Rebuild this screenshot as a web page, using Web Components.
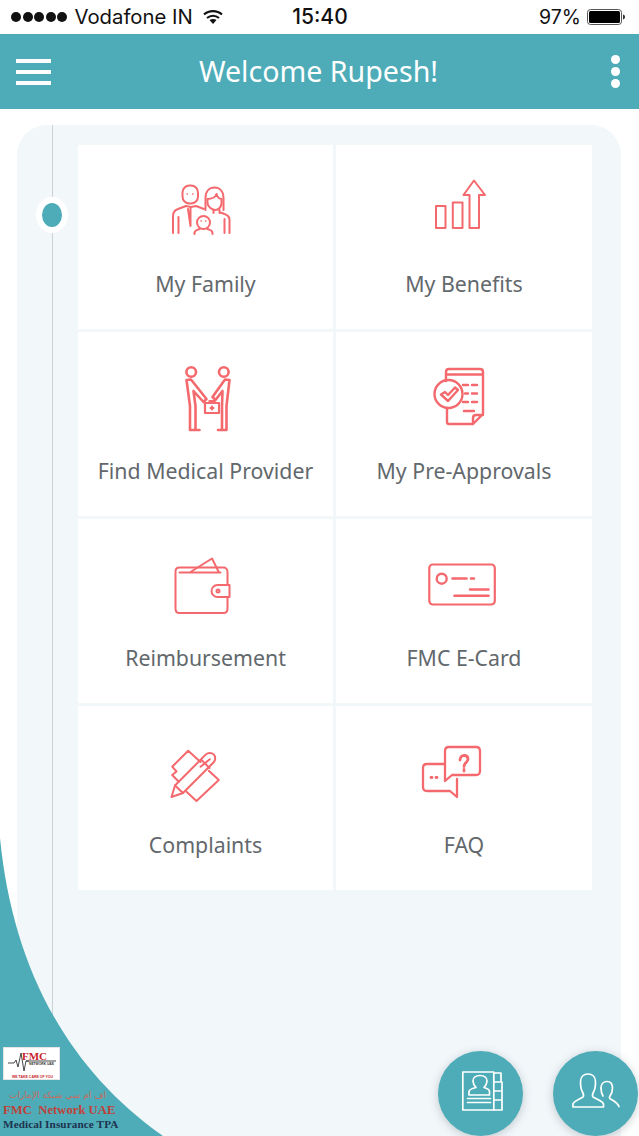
<!DOCTYPE html>
<html lang="en"><head><meta charset="utf-8"><title>FMC</title>
<style>
html,body{margin:0;padding:0;background:#fff}
body{font-family:"Noto Sans","Open Sans",sans-serif}
</style></head><body>
<fmc-app>
  <fmc-statusbar></fmc-statusbar>
  <fmc-header title-text="Welcome Rupesh!"></fmc-header>
  <fmc-panel>
    <fmc-tile label="My Family"><svg viewBox="155.5 170 100 80">
      <rect x="182" y="185.5" width="15.5" height="18" rx="7"/>
      <path d="M172.5 233v-17c0-4 2-6 5-7l8-3 5 1 5-1 8 3"/><path d="M178 233v-16M190 208v7M187.5 209l2.500 17M190 226v-11"/>
      <path d="M205 210v-12c0-7 4-10.500 9-10.500s9 3.500 9 10.500v12"/><path d="M207 199c4 0 8-2 9-5 1 3 3 5 5 5v4c0 4-3 7-6 7s-8-3-8-7z"/>
      <path d="M213 210v3M219 210v3M219 212l5 2c3 1 5 3 5 6v13M224 233v-14"/>
      <circle cx="203" cy="222.500" r="6.500"/><path d="M194 234v-1c0-3 3-3 5-4M212 234v-1c0-3-3-3-5-4"/>
      <path d="M200.500 221h.5M205 221h.5M186.500 194h.5M192 194h.5" stroke-width="1.300"/>
    </svg></fmc-tile>
    <fmc-tile label="My Benefits"><svg viewBox="414 170 100 80">
      <rect x="436" y="206" width="9.500" height="22"/><rect x="452.800" y="202.500" width="9.700" height="25.500"/>
      <path d="M469.500 228V195h-6l10.500-14.500L485 195h-6v33z"/>
    </svg></fmc-tile>
    <fmc-tile label="Find Medical Provider"><svg viewBox="155.500 357 100 80" style="stroke-width:2.600">
      <circle cx="190.700" cy="372" r="4.800"/><circle cx="223.300" cy="372" r="4.800"/>
      <path d="M186 380l4.500-.5L206 399l-3 3-10-11 2 15v24h4M186 380l3.500 26v24h4"/>
      <path d="M229 380l-4.500-.5L212 397l3 3 7-9-.5 15v24h-4M229 380l-3 26v24h-5"/>
      <path d="M204.500 403h14v10h-14zM209 403v-2h5v2M211.500 406.500v3M210 408h3" stroke-width="2.200"/>
    </svg></fmc-tile>
    <fmc-tile label="My Pre-Approvals"><svg viewBox="414 357 100 80" style="stroke-width:2.400">
      <path d="M446 381v-9c0-2 1-3 3-3h31c2 0 3 1 3 3v42l-10 10h-24c-1 0-2-1-2-2v-14M446 374.500h37M483 415h-7c-2 0-3 1-3 3v6"/>
      <circle cx="448.500" cy="394" r="14"/><path d="M441 394.500l4-2.500 3 3 7-7.500 3 2.500-10 11z"/>
      <path d="M463 385h5M472 385h5M465 393.500h3M472 393.500h5M463 402h5M472 402h5M464 411h10"/>
    </svg></fmc-tile>
    <fmc-tile label="Reimbursement"><svg viewBox="155.500 544 100 80">
      <path d="M227 585v-13c0-3-2-4.500-4-4.500h-44c-2.500 0-4 1.500-4 4v37c0 3 1.500 4.500 4 4.500h44c2.500 0 4-1.500 4-4.500v-11.500"/>
      <path d="M179 572.500h41M190 572l21.500-13.500 6.500 13"/><path d="M229 585h-12c-3.500 0-6 3-6 6s2.500 6 6 6h12z"/>
      <circle cx="217.500" cy="591" r="1.500"/>
    </svg></fmc-tile>
    <fmc-tile label="FMC E-Card"><svg viewBox="414 544 100 80">
      <rect x="429.300" y="564.500" width="65.500" height="40" rx="3.500" stroke-width="2.200"/><circle cx="441.700" cy="578.700" r="5" stroke-width="2.400"/>
      <path d="M452.500 578.500h14M471 578.500h3M470 589.500h18.500M454.500 595.700h34" stroke-width="2.600"/>
    </svg></fmc-tile>
    <fmc-tile label="Complaints"><svg viewBox="155.500 731 100 80">
      <path d="M200 762l-12.300-11.300-16 16 4.300 4.800-4.300 3.500 6.600 6.700"/>
      <path d="M208.300 770.700l10 9.300L196 801l-10-9.300"/>
      <path d="M171 797l3.500-11.500 30.900-31.100c2-2 5.800-2 7.800 0s2 5.800 0 7.800L182.500 793z"/><path d="M174.500 785.500l8 7.500M201 760l8 8M200 766.700l9.300-7.400"/>
    </svg></fmc-tile>
    <fmc-tile label="FAQ"><svg viewBox="414 731 100 80" style="stroke-width:2.300">
      <path d="M445 781v-30c0-2.500 1.500-4 4-4h27c2.500 0 4 1.500 4 4v20c0 2.500-1.500 4-4 4h-24z"/>
      <path d="M445 764h-18c-2.500 0-4 1.500-4 4v19c0 2.500 1.500 4 4 4h23l7 6v-18"/>
      <path d="M460 760c0-3 2-4.500 4-4.500 2.500 0 4 1.500 4 3.500 0 3.500-4 3.500-4 7.500M464 769.500v1.500M431 777.500h1M436 777.500h1" stroke-width="2.800"/>
    </svg></fmc-tile>
  </fmc-panel>
  <fmc-corner></fmc-corner>
  <fmc-logo></fmc-logo>
  <fmc-fab style="left:437.500px"><svg viewBox="0 0 85 85">
    <rect x="24.800" y="21" width="31" height="38"/><path d="M56 22h7v9h-7M56 31h8v9h-8M56 40h8v9h-8M56 49h8v10h-8"/>
    <path d="M31 44v-3.500c0-2 3-3 7-4-2-2-3-4-3-6.500 0-3.500 3-5.500 7-5.500s7 2 7 5.500c0 2.500-1 4.500-3 6.500 4 1 5.500 2 5.500 4v3.500z"/><path d="M29.500 47.500h23M29.500 51.500h23"/>
  </svg></fmc-fab>
  <fmc-fab style="left:552.500px"><svg viewBox="0 0 85 85">
    <path d="M20 56v-3c1-3 5-4 10-7 1-1 1-2-.5-5-1.500-2.500-2-5-2-10 0-5 3-8 7.500-8s7.500 3 7.500 8c0 5-.5 7.500-2 10-1.500 3-1.500 4-.5 5 5 3 9 4 10.500 7v3z"/>
    <path d="M48 37c0-4 2.500-6.500 6-6.500s5.500 2.500 5.500 6.500c0 4-1 6-2.500 8-1 1.500-.5 2.500.5 3 4 2 7 4 8.500 7.500"/><path d="M48 37c0 3 .5 5.500 2 8"/>
  </svg></fmc-fab>
</fmc-app>
<script>
function def(name, html){
  customElements.define(name, class extends HTMLElement{
    constructor(){super();const r=this.attachShadow({mode:'open'});r.innerHTML=typeof html==='function'?html(this):html;}
    connectedCallback(){ if(typeof html==='function') this.shadowRoot.innerHTML=html(this); }
  });
}
def('fmc-app',`<style>:host{display:flex;flex-direction:column;position:relative;width:639px;height:1136px;overflow:hidden;background:#fff}</style><slot></slot>`);

def('fmc-statusbar',`<style>
:host{display:grid;grid-template-columns:1fr auto 1fr;align-items:center;height:34px;padding:0 14px 0 11px;box-sizing:border-box;background:#fff;color:#111;font:400 20.300px/34px Inter,"Liberation Sans",sans-serif}
.l,.r{display:flex;align-items:center}
.r{justify-content:flex-end}
.dots{display:flex;gap:1.500px;margin-right:7.500px}
.dots i{width:10px;height:10px;border-radius:50%;background:#111}
.t{font-weight:500;font-size:21px;margin-left:4px}
svg{display:block}
.wifi{margin-left:10px}
.bat{margin-left:6px}
.pc{font-size:19.500px}
</style>
<div class="l"><span class="dots"><i></i><i></i><i></i><i></i><i></i></span><span class="name">Vodafone IN</span>
<svg class="wifi" width="20" height="16" viewBox="0 0 20 16" fill="none" stroke="#111" stroke-width="2.200"><path d="M1 5.500C6 1 14 1 19 5.500M4 9c3.500-3 8.500-3 12 0"/><path d="M10 15l-3.500-4c2-1.500 5-1.500 7 0z" fill="#111" stroke="none"/></svg></div>
<div class="t">15:40</div>
<div class="r"><span class="pc">97%</span><svg class="bat" width="38" height="16" viewBox="0 0 38 16"><rect x=".5" y=".5" width="34" height="15" rx="3" fill="none" stroke="#555"/><rect x="2" y="2" width="31" height="12" rx="1.500" fill="#000"/><path d="M36 5.500c1.200.3 2 1.200 2 2.500s-.8 2.200-2 2.500z" fill="#333"/></svg></div>`);

def('fmc-header',el=>`<style>
:host{display:grid;grid-template-columns:1fr auto 1fr;align-items:center;height:75px;background:#4dacb7;color:#fff;padding:0 16px;box-sizing:border-box}
h1{margin:0;font:400 28.600px/75px "Noto Sans",sans-serif;margin-top:-2px;margin-left:-2px;color:#fff}
.m{display:flex;flex-direction:column;gap:7px;width:35px}
.m i{display:block;height:4px;background:#fff}
.d{display:flex;flex-direction:column;gap:3.500px;justify-self:end;margin-right:3.500px}
.d i{width:8.800px;height:8.800px;border-radius:50%;background:#fff}
</style>
<div class="m"><i></i><i></i><i></i></div><h1>${el.getAttribute('title-text')||''}</h1><div class="d"><i></i><i></i><i></i></div>`);

def('fmc-panel',`<style>
:host{display:block;flex:1;position:relative;margin:16px 18px 0 17px;background:#f2f7fa;border-radius:30px 30px 0 0;padding:20px 29px 0 61px}
.grid{display:grid;grid-template-columns:255px 256px;grid-auto-rows:184px;gap:3px}
.line{position:absolute;left:35px;top:0;width:1.200px;height:895px;background:#c9d3d6}
.dot{position:absolute;left:19px;top:72px;width:20px;height:24px;border:6px solid #fff;border-radius:50%;background:#4dacb7}
</style>
<div class="line"></div><div class="dot"></div>
<div class="grid"><slot></slot></div>`);

def('fmc-tile',el=>`<style>
:host{display:flex;flex-direction:column;align-items:center;background:#fff;padding-top:25px;box-sizing:border-box}
::slotted(svg){display:block;width:100px;height:80px;fill:none;stroke:#f4696d;stroke-width:2;stroke-linecap:round;stroke-linejoin:round}
.l{margin-top:18px;font:400 21.300px/32px "Noto Sans",sans-serif;color:#62686c;white-space:nowrap}
</style><slot></slot><div class="l">${el.getAttribute('label')||''}</div>`);

def('fmc-corner',`<style>:host{position:absolute;left:0;bottom:0;width:170px;height:298px;pointer-events:none}svg{display:block}</style>
<svg width="170" height="298" viewBox="0 838 170 298"><path d="M0 838C12 960 62 1065 163 1136H0z" fill="#4dacb7"/></svg>`);

def('fmc-logo',`<style>
:host{position:absolute;left:3px;top:1047px;width:125px;display:flex;flex-direction:column;font-family:"Liberation Serif",serif;font-weight:700;white-space:nowrap}
.card{position:relative;box-sizing:border-box;width:57px;height:33px;background:#fff;border:1px solid #e5e5e5;overflow:hidden}
.card b{position:absolute;left:18px;top:3px;font:700 11px/10px "Liberation Serif",serif;color:#c8232c}
.card span{position:absolute;left:25px;top:14px;font:700 3.300px/4px "Liberation Sans",sans-serif;color:#333}
.card em{position:absolute;left:8px;top:27px;font:700 3.500px/4px "Liberation Sans",sans-serif;color:#c8232c;font-style:normal}
.card svg{position:absolute;left:4px;top:4px}
.ar{font:400 9px/15px "DejaVu Sans",sans-serif;color:#c96a5e;align-self:flex-start;margin-top:8px;margin-left:6px}
.a{font-size:12.700px;line-height:15px;color:#c0413a;white-space:pre}
.b{font-size:11.200px;line-height:13px;color:#1e3350;letter-spacing:.1px}
</style>
<div class="card"><svg width="50" height="20" viewBox="0 0 50 20" fill="none" stroke="#333" stroke-width=".9"><path d="M0 11h6l2-3 2 7 3-14 3 18 2-10h3"/><path d="M18 9h30"/></svg><b>FMC</b><span>NETWORK UAE</span><em>WE TAKE CARE OF YOU</em></div>
<div class="ar" dir="rtl" lang="ar">اف ام سي شبكة الإمارات</div>
<div class="a">FMC  Network UAE</div>
<div class="b">Medical Insurance TPA</div>`);

def('fmc-fab',`<style>
:host{position:absolute;top:1051px;width:85px;height:85px;border-radius:50%;background:#4dacb7;box-shadow:0 2px 10px rgba(60,80,90,.28)}
::slotted(svg){display:block;width:85px;height:85px;fill:none;stroke:#fff;stroke-width:1.700;stroke-linejoin:round;stroke-linecap:round}
</style><slot></slot>`);
</script>
</body></html>
